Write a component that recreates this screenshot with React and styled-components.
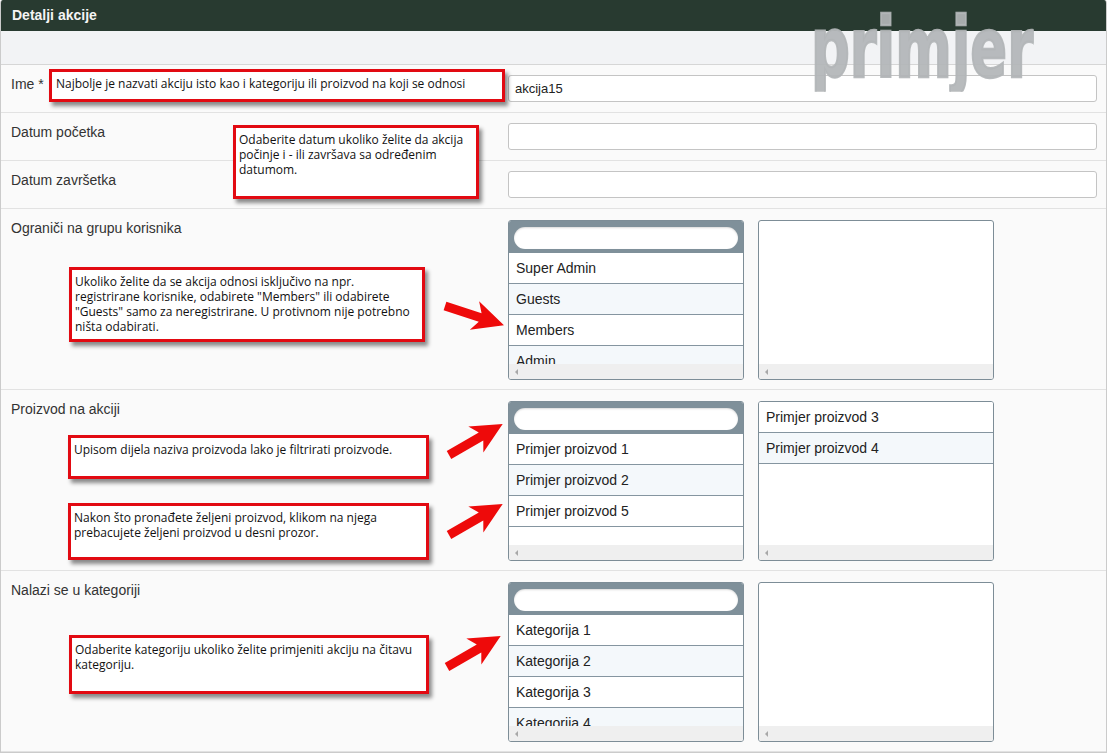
import styled, { createGlobalStyle } from "styled-components";

const GlobalStyle = createGlobalStyle`
  body {
    margin: 0;
    background: #ffffff;
    font-family: "Liberation Sans", Arial, sans-serif;
  }
`;

//outer frame of the form
const Panel = styled.div`
  position: relative;
  width: 1107px;
  box-sizing: border-box;
  border: 1px solid #cbcbcb;
  border-top: none;
  border-radius: 3px 3px 0 0;
  overflow: hidden;
`;

const Header = styled.div`
  height: 31px;
  background: #283a30;
  color: #f4f4f4;
  font-weight: bold;
  font-size: 14px;
  line-height: 31px;
  padding-left: 11px;
`;

const Band = styled.div`
  height: 33px;
  background: #f2f3f5;
  border-bottom: 1px solid #d6d6d6;
`;

const Watermark = styled.div`
  position: absolute;
  left: 810px;
  top: 7px;
  height: 106px;
  overflow: hidden;
  z-index: 3;
  font-family: "Liberation Sans Narrow", "DejaVu Sans Condensed", sans-serif;
  font-weight: bold;
  font-size: 104px;
  line-height: 104px;
  color: rgba(178, 181, 183, 0.92);
  -webkit-text-stroke: 3px rgba(178, 181, 183, 0.92);
  transform: scale(0.58, 0.8);
  transform-origin: left top;
  pointer-events: none;
`;

const Row = styled.div`
  position: relative;
  display: grid;
  grid-template-columns: 497px 1fr;
  padding: 10px 9px 10px 10px;
  background: #fafafa;
  border-bottom: 1px solid #e2e2e2;
`;

const Label = styled.div`
  font-size: 14px;
  line-height: 18px;
  color: #333;
`;

const TextInput = styled.div`
  height: 27px;
  box-sizing: border-box;
  background: #fff;
  border: 1px solid #c4c4c4;
  border-radius: 3px;
  font-size: 13px;
  line-height: 25px;
  padding-left: 6px;
  color: #222;
`;

const Pickers = styled.div`
  display: flex;
  gap: 14px;
  margin: 1px 0 -1px;
`;

const ListBox = styled.div`
  width: 236px;
  height: 160px;
  box-sizing: border-box;
  border: 1px solid #7d8d97;
  border-radius: 3px;
  background: #fff;
  display: flex;
  flex-direction: column;
  overflow: hidden;
`;

const FilterBar = styled.div`
  height: 32px;
  flex-shrink: 0;
  background: #7f909a;
  padding: 6px 5px 0 5px;
  box-sizing: border-box;
`;

const FilterInput = styled.div`
  height: 22px;
  border-radius: 11px;
  background: #fff;
  box-shadow: inset 0 1px 2px rgba(0, 0, 0, 0.15);
`;

const Items = styled.div`
  flex: 1;
  overflow: hidden;
`;

const Item = styled.div`
  height: 30px;
  border-bottom: 1px solid #8595a0;
  background: ${(p) => (p.$alt ? "#f4f8fb" : "#fff")};
  font-size: 14px;
  line-height: 31px;
  padding-left: 7px;
  color: #222;
  white-space: nowrap;
`;

const ScrollBar = styled.div`
  height: 15px;
  flex-shrink: 0;
  background: #efefef;
  display: flex;
  align-items: center;
  padding-left: 6px;
`;

const ScrollArrow = styled.span`
  width: 0;
  height: 0;
  border-top: 3px solid transparent;
  border-bottom: 3px solid transparent;
  border-right: 3px solid #a8a8a8;
`;

//red annotation boxes lying over the form
const Callout = styled.div`
  position: absolute;
  left: ${(p) => p.$left}px;
  top: ${(p) => p.$top}px;
  width: ${(p) => p.$width}px;
  height: ${(p) => p.$height}px;
  box-sizing: border-box;
  background: #fff;
  border: 3px solid #e20a12;
  box-shadow: 3px 4px 4px rgba(0, 0, 0, 0.45);
  padding: ${(p) => p.$pad || "4px 3px"};
  font-family: "Open Sans", "Noto Sans", sans-serif;
  font-size: 12px;
  line-height: 15px;
  color: #111;
  z-index: 2;
`;

const ArrowSvg = styled.svg`
  position: absolute;
  left: ${(p) => p.$left}px;
  top: ${(p) => p.$top}px;
  z-index: 2;
`;

function Arrow({ left, top, down }) {
  const g = down ? "translate(4,14) rotate(18)" : "translate(6,44) rotate(-30)";
  return (
    <ArrowSvg $left={left} $top={top} width="80" height="60" viewBox="0 0 80 60">
      <g transform={g}>
        <polygon
          points="0,-4.5 37,-4.5 31,-15 62,0 31,15 37,4.5 0,4.5"
          fill="#ee0a0a"
        />
      </g>
    </ArrowSvg>
  );
}

function Picker({ items, filter = true }) {
  return (
    <ListBox>
      {filter && (
        <FilterBar>
          <FilterInput />
        </FilterBar>
      )}
      <Items>
        {items.map((it, i) => (
          <Item key={it} $alt={i % 2 === 1}>
            {it}
          </Item>
        ))}
      </Items>
      <ScrollBar>
        <ScrollArrow />
      </ScrollBar>
    </ListBox>
  );
}

export default function App() {
  return (
    <>
      <GlobalStyle />
      <Panel>
        <Header>Detalji akcije</Header>
        <Band />
        <Watermark>primjer</Watermark>

        <Row>
          <Label>Ime *</Label>
          <TextInput>akcija15</TextInput>
          <Callout $left={48} $top={4} $width={456} $height={33} $pad="4px 4px">
            Najbolje je nazvati akciju isto kao i kategoriju ili proizvod na koji se odnosi
          </Callout>
        </Row>

        <Row>
          <Label>Datum početka</Label>
          <TextInput />
          <Callout $left={232} $top={12} $width={246} $height={74}>
            Odaberite datum ukoliko želite da akcija počinje i - ili završava sa određenim datumom.
          </Callout>
        </Row>

        <Row>
          <Label>Datum završetka</Label>
          <TextInput />
        </Row>

        <Row>
          <Label>Ograniči na grupu korisnika</Label>
          <Pickers>
            <Picker items={["Super Admin", "Guests", "Members", "Admin", "Registered"]} />
            <Picker items={[]} filter={false} />
          </Pickers>
          <Callout $left={68} $top={58} $width={356} $height={75}>
            Ukoliko želite da se akcija odnosi isključivo na npr. registrirane korisnike, odabirete
            "Members" ili odabirete "Guests" samo za neregistrirane. U protivnom nije potrebno ništa
            odabirati.
          </Callout>
          <Arrow left={440} top={83} down />
        </Row>

        <Row>
          <Label>Proizvod na akciji</Label>
          <Pickers>
            <Picker items={["Primjer proizvod 1", "Primjer proizvod 2", "Primjer proizvod 5"]} />
            <Picker items={["Primjer proizvod 3", "Primjer proizvod 4"]} filter={false} />
          </Pickers>
          <Callout $left={67} $top={45} $width={361} $height={44}>
            Upisom dijela naziva proizvoda lako je filtrirati proizvode.
          </Callout>
          <Callout $left={67} $top={113} $width={361} $height={57}>
            Nakon što pronađete željeni proizvod, klikom na njega prebacujete željeni proizvod u desni
            prozor.
          </Callout>
          <Arrow left={442} top={21} />
          <Arrow left={442} top={101} />
        </Row>

        <Row>
          <Label>Nalazi se u kategoriji</Label>
          <Pickers>
            <Picker items={["Kategorija 1", "Kategorija 2", "Kategorija 3", "Kategorija 4", "Kategorija 5"]} />
            <Picker items={[]} filter={false} />
          </Pickers>
          <Callout $left={68} $top={64} $width={360} $height={59}>
            Odaberite kategoriju ukoliko želite primjeniti akciju na čitavu kategoriju.
          </Callout>
          <Arrow left={440} top={52} />
        </Row>
      </Panel>
    </>
  );
}
